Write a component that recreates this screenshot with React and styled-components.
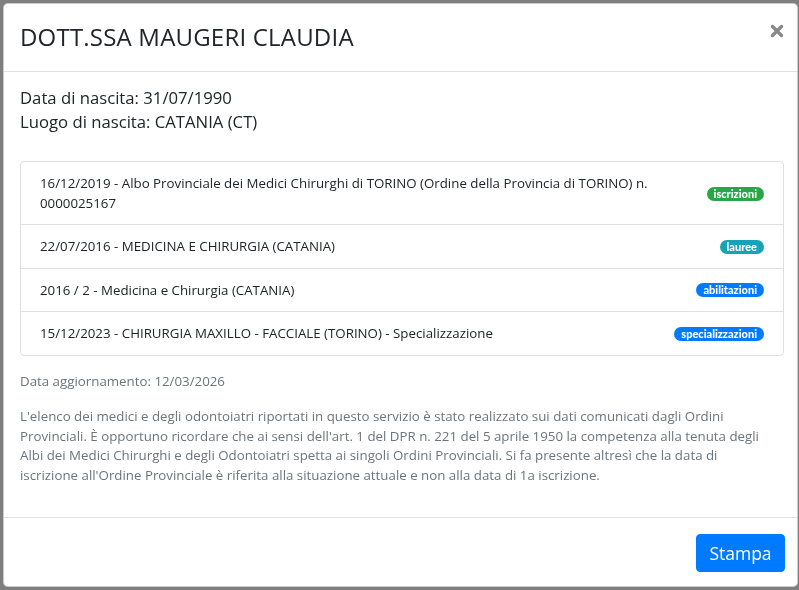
import React from "react";
import styled, { createGlobalStyle } from "styled-components";

const Global = createGlobalStyle`
  html, body { margin: 0; padding: 0; }
  body {
    width: 799px; height: 590px; overflow: hidden;
    font-family: "Open Sans", "Liberation Sans", sans-serif;
    background: #fff; color: #212529;
  }
`;

const Page = styled.div`
  height: 590px;
  background: #fff;
`;

const Backdrop = styled.div`
  position: fixed;
  inset: 0;
  background: rgba(0, 0, 0, 0.5);
`;

const ModalLayer = styled.div`
  position: fixed;
  inset: 0;
  padding: 3px 1px 0 3px;
`;

const Modal = styled.div`
  background: #fff;
  border: 1px solid rgba(0, 0, 0, 0.2);
  border-radius: 5px;
  display: flex;
  flex-direction: column;
`;

const Header = styled.div`
  display: flex;
  justify-content: space-between;
  align-items: flex-start;
  padding: 15px 13px 16px 16px;
  border-bottom: 1px solid #dee2e6;
`;

const Title = styled.h5`
  margin: 0;
  font-size: 24px;
  font-weight: 500;
  line-height: 36px;
  color: #212529;
  letter-spacing: 0.2px;
`;

const Close = styled.button`
  border: 0;
  background: transparent;
  padding: 0;
  margin: 5px 0 0 0;
  width: 14px;
  height: 14px;
  display: flex;
  cursor: pointer;
`;

const Body = styled.div`
  padding: 14px 13px 16px 16px;
`;

const Info = styled.p`
  margin: 0 0 27px 0;
  font-size: 16.7px;
  line-height: 24px;
`;

const List = styled.ul`
  list-style: none;
  margin: 0 0 16px 0;
  padding: 0;
  border: 1px solid rgba(0, 0, 0, 0.125);
  border-radius: 4px;
`;

const Item = styled.li`
  display: flex;
  align-items: center;
  justify-content: space-between;
  gap: 16px;
  padding: 12px 19px 11px 19px;
  font-size: 13.3px;
  line-height: 19.5px;
  color: #212529;
  & + & { border-top: 1px solid rgba(0, 0, 0, 0.125); }
`;

const Badge = styled.span`
  flex: none;
  background: ${(p) => p.$bg};
  color: #fff;
  font-family: "Lato", "Open Sans", sans-serif;
  font-weight: 900;
  font-size: 11px;
  line-height: 14px;
  padding: 0 7px;
  border-radius: 10px;
`;

const Muted = styled.p`
  margin: 0 0 16px 0;
  font-size: 13.3px;
  line-height: 19.5px;
  color: #6c757d;
  white-space: nowrap;
`;

const Footer = styled.div`
  display: flex;
  justify-content: flex-end;
  padding: 16px 12px 14px 16px;
  border-top: 1px solid #dee2e6;
`;

const Button = styled.button`
  background: #007bff;
  color: #fff;
  border: 1px solid #007bff;
  border-radius: 4px;
  font-family: "Open Sans", sans-serif;
  font-size: 17.5px;
  font-weight: 500;
  line-height: 24px;
  padding: 6px 0;
  width: 89px;
`;

const rows = [
  {
    text: (
      <>
        16/12/2019 - Albo Provinciale dei Medici Chirurghi di TORINO (Ordine della Provincia di TORINO) n.
        <br />
        0000025167
      </>
    ),
    badge: "iscrizioni",
    color: "#28a745",
  },
  { text: "22/07/2016 - MEDICINA E CHIRURGIA (CATANIA)", badge: "lauree", color: "#17a2b8" },
  { text: "2016 / 2 - Medicina e Chirurgia (CATANIA)", badge: "abilitazioni", color: "#007bff" },
  {
    text: "15/12/2023 - CHIRURGIA MAXILLO - FACCIALE (TORINO) - Specializzazione",
    badge: "specializzazioni",
    color: "#007bff",
  },
];

export default function App() {
  return (
    <>
      <Global />
      <Page />
      <Backdrop />
      <ModalLayer>
        <Modal>
          <Header>
            <Title>DOTT.SSA MAUGERI CLAUDIA</Title>
            <Close aria-label="Chiudi">
              <svg width="14" height="14" viewBox="0 0 14 14">
                <path d="M2.5 2.5 L11.5 11.5 M11.5 2.5 L2.5 11.5" stroke="#888" strokeWidth="3.4" strokeLinecap="round" />
              </svg>
            </Close>
          </Header>
          <Body>
            <Info>
              Data di nascita: 31/07/1990
              <br />
              Luogo di nascita: CATANIA (CT)
            </Info>
            <List>
              {rows.map((r) => (
                <Item key={r.badge}>
                  <span>{r.text}</span>
                  <Badge $bg={r.color}>{r.badge}</Badge>
                </Item>
              ))}
            </List>
            <Muted>Data aggiornamento: 12/03/2026</Muted>
            <Muted>
              L'elenco dei medici e degli odontoiatri riportati in questo servizio è stato realizzato sui dati comunicati dagli Ordini
              <br />
              Provinciali. È opportuno ricordare che ai sensi dell'art. 1 del DPR n. 221 del 5 aprile 1950 la competenza alla tenuta degli
              <br />
              Albi dei Medici Chirurghi e degli Odontoiatri spetta ai singoli Ordini Provinciali. Si fa presente altresì che la data di
              <br />
              iscrizione all'Ordine Provinciale è riferita alla situazione attuale e non alla data di 1a iscrizione.
            </Muted>
          </Body>
          <Footer>
            <Button>Stampa</Button>
          </Footer>
        </Modal>
      </ModalLayer>
    </>
  );
}
